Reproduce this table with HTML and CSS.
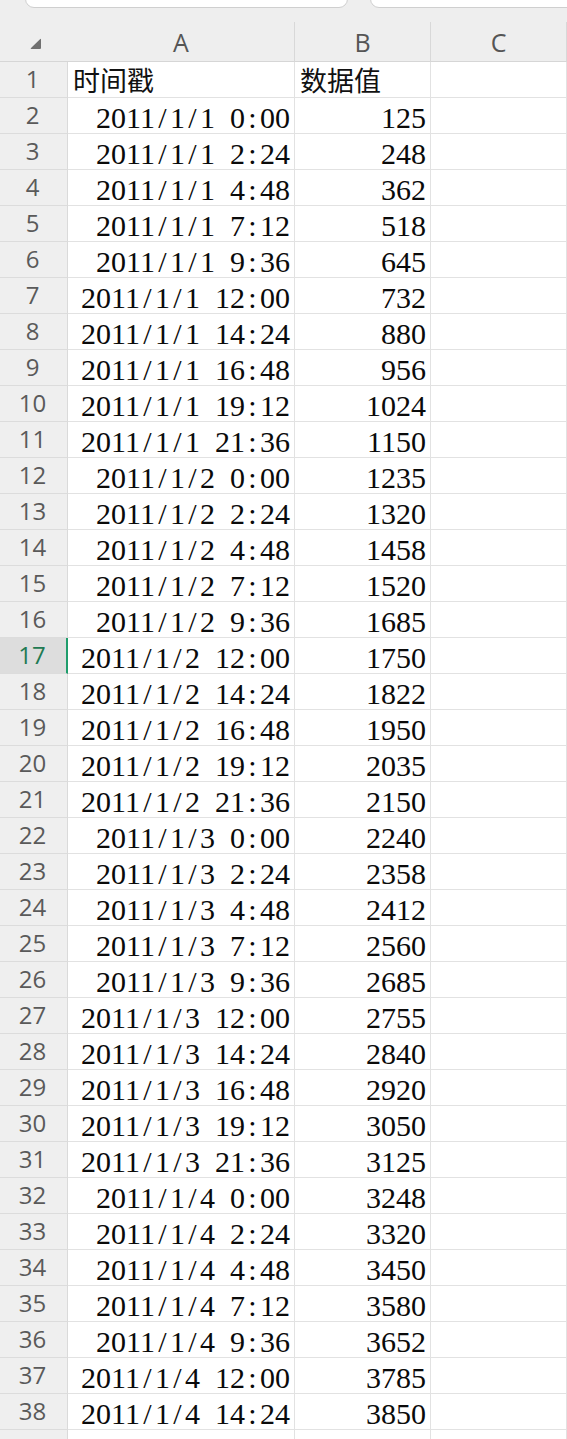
FILE: index.html
```html
<!DOCTYPE html>
<html lang="zh">
<head>
<meta charset="utf-8">
<title>Sheet</title>
<link rel="stylesheet" href="styles.css">
</head>
<body>
<div class="sheet">
  <div class="tabs">
    <div class="tab tab-1"></div>
    <div class="tab tab-2"></div>
  </div>
  <div class="row head">
    <div class="rh corner"><svg class="tri" width="11" height="11" viewBox="0 0 11 11"><path d="M10 1.2 Q11 0 11 1.6 V10 Q11 11 10 11 H1.4 Q0 11 1 10 Z" fill="#707070"/></svg></div>
    <div class="c a ch">A</div>
    <div class="c b ch">B</div>
    <div class="c cc ch">C</div>
  </div>
  <div class="row"><div class="rh">1</div><div class="c a l cjk">时间戳</div><div class="c b l cjk">数据值</div><div class="c cc"></div></div>
  <div class="row"><div class="rh">2</div><div class="c a">2011<i>/</i>1<i>/</i>1<i> </i>0<i>:</i>00</div><div class="c b">125</div><div class="c cc"></div></div>
  <div class="row"><div class="rh">3</div><div class="c a">2011<i>/</i>1<i>/</i>1<i> </i>2<i>:</i>24</div><div class="c b">248</div><div class="c cc"></div></div>
  <div class="row"><div class="rh">4</div><div class="c a">2011<i>/</i>1<i>/</i>1<i> </i>4<i>:</i>48</div><div class="c b">362</div><div class="c cc"></div></div>
  <div class="row"><div class="rh">5</div><div class="c a">2011<i>/</i>1<i>/</i>1<i> </i>7<i>:</i>12</div><div class="c b">518</div><div class="c cc"></div></div>
  <div class="row"><div class="rh">6</div><div class="c a">2011<i>/</i>1<i>/</i>1<i> </i>9<i>:</i>36</div><div class="c b">645</div><div class="c cc"></div></div>
  <div class="row"><div class="rh">7</div><div class="c a">2011<i>/</i>1<i>/</i>1<i> </i>12<i>:</i>00</div><div class="c b">732</div><div class="c cc"></div></div>
  <div class="row"><div class="rh">8</div><div class="c a">2011<i>/</i>1<i>/</i>1<i> </i>14<i>:</i>24</div><div class="c b">880</div><div class="c cc"></div></div>
  <div class="row"><div class="rh">9</div><div class="c a">2011<i>/</i>1<i>/</i>1<i> </i>16<i>:</i>48</div><div class="c b">956</div><div class="c cc"></div></div>
  <div class="row"><div class="rh">10</div><div class="c a">2011<i>/</i>1<i>/</i>1<i> </i>19<i>:</i>12</div><div class="c b">1024</div><div class="c cc"></div></div>
  <div class="row"><div class="rh">11</div><div class="c a">2011<i>/</i>1<i>/</i>1<i> </i>21<i>:</i>36</div><div class="c b">1150</div><div class="c cc"></div></div>
  <div class="row"><div class="rh">12</div><div class="c a">2011<i>/</i>1<i>/</i>2<i> </i>0<i>:</i>00</div><div class="c b">1235</div><div class="c cc"></div></div>
  <div class="row"><div class="rh">13</div><div class="c a">2011<i>/</i>1<i>/</i>2<i> </i>2<i>:</i>24</div><div class="c b">1320</div><div class="c cc"></div></div>
  <div class="row"><div class="rh">14</div><div class="c a">2011<i>/</i>1<i>/</i>2<i> </i>4<i>:</i>48</div><div class="c b">1458</div><div class="c cc"></div></div>
  <div class="row"><div class="rh">15</div><div class="c a">2011<i>/</i>1<i>/</i>2<i> </i>7<i>:</i>12</div><div class="c b">1520</div><div class="c cc"></div></div>
  <div class="row"><div class="rh">16</div><div class="c a">2011<i>/</i>1<i>/</i>2<i> </i>9<i>:</i>36</div><div class="c b">1685</div><div class="c cc"></div></div>
  <div class="row"><div class="rh active">17</div><div class="c a">2011<i>/</i>1<i>/</i>2<i> </i>12<i>:</i>00</div><div class="c b">1750</div><div class="c cc"></div></div>
  <div class="row"><div class="rh">18</div><div class="c a">2011<i>/</i>1<i>/</i>2<i> </i>14<i>:</i>24</div><div class="c b">1822</div><div class="c cc"></div></div>
  <div class="row"><div class="rh">19</div><div class="c a">2011<i>/</i>1<i>/</i>2<i> </i>16<i>:</i>48</div><div class="c b">1950</div><div class="c cc"></div></div>
  <div class="row"><div class="rh">20</div><div class="c a">2011<i>/</i>1<i>/</i>2<i> </i>19<i>:</i>12</div><div class="c b">2035</div><div class="c cc"></div></div>
  <div class="row"><div class="rh">21</div><div class="c a">2011<i>/</i>1<i>/</i>2<i> </i>21<i>:</i>36</div><div class="c b">2150</div><div class="c cc"></div></div>
  <div class="row"><div class="rh">22</div><div class="c a">2011<i>/</i>1<i>/</i>3<i> </i>0<i>:</i>00</div><div class="c b">2240</div><div class="c cc"></div></div>
  <div class="row"><div class="rh">23</div><div class="c a">2011<i>/</i>1<i>/</i>3<i> </i>2<i>:</i>24</div><div class="c b">2358</div><div class="c cc"></div></div>
  <div class="row"><div class="rh">24</div><div class="c a">2011<i>/</i>1<i>/</i>3<i> </i>4<i>:</i>48</div><div class="c b">2412</div><div class="c cc"></div></div>
  <div class="row"><div class="rh">25</div><div class="c a">2011<i>/</i>1<i>/</i>3<i> </i>7<i>:</i>12</div><div class="c b">2560</div><div class="c cc"></div></div>
  <div class="row"><div class="rh">26</div><div class="c a">2011<i>/</i>1<i>/</i>3<i> </i>9<i>:</i>36</div><div class="c b">2685</div><div class="c cc"></div></div>
  <div class="row"><div class="rh">27</div><div class="c a">2011<i>/</i>1<i>/</i>3<i> </i>12<i>:</i>00</div><div class="c b">2755</div><div class="c cc"></div></div>
  <div class="row"><div class="rh">28</div><div class="c a">2011<i>/</i>1<i>/</i>3<i> </i>14<i>:</i>24</div><div class="c b">2840</div><div class="c cc"></div></div>
  <div class="row"><div class="rh">29</div><div class="c a">2011<i>/</i>1<i>/</i>3<i> </i>16<i>:</i>48</div><div class="c b">2920</div><div class="c cc"></div></div>
  <div class="row"><div class="rh">30</div><div class="c a">2011<i>/</i>1<i>/</i>3<i> </i>19<i>:</i>12</div><div class="c b">3050</div><div class="c cc"></div></div>
  <div class="row"><div class="rh">31</div><div class="c a">2011<i>/</i>1<i>/</i>3<i> </i>21<i>:</i>36</div><div class="c b">3125</div><div class="c cc"></div></div>
  <div class="row"><div class="rh">32</div><div class="c a">2011<i>/</i>1<i>/</i>4<i> </i>0<i>:</i>00</div><div class="c b">3248</div><div class="c cc"></div></div>
  <div class="row"><div class="rh">33</div><div class="c a">2011<i>/</i>1<i>/</i>4<i> </i>2<i>:</i>24</div><div class="c b">3320</div><div class="c cc"></div></div>
  <div class="row"><div class="rh">34</div><div class="c a">2011<i>/</i>1<i>/</i>4<i> </i>4<i>:</i>48</div><div class="c b">3450</div><div class="c cc"></div></div>
  <div class="row"><div class="rh">35</div><div class="c a">2011<i>/</i>1<i>/</i>4<i> </i>7<i>:</i>12</div><div class="c b">3580</div><div class="c cc"></div></div>
  <div class="row"><div class="rh">36</div><div class="c a">2011<i>/</i>1<i>/</i>4<i> </i>9<i>:</i>36</div><div class="c b">3652</div><div class="c cc"></div></div>
  <div class="row"><div class="rh">37</div><div class="c a">2011<i>/</i>1<i>/</i>4<i> </i>12<i>:</i>00</div><div class="c b">3785</div><div class="c cc"></div></div>
  <div class="row"><div class="rh">38</div><div class="c a">2011<i>/</i>1<i>/</i>4<i> </i>14<i>:</i>24</div><div class="c b">3850</div><div class="c cc"></div></div>
  <div class="row"><div class="rh">39</div><div class="c a">2011<i>/</i>1<i>/</i>4<i> </i>16<i>:</i>48</div><div class="c b">3920</div><div class="c cc"></div></div>
</div>
</body>
</html>
```
FILE: styles.css
```css
html, body {
  margin: 0;
  padding: 0;
  background: #ffffff;
}
body {
  width: 567px;
  height: 1439px;
  overflow: hidden;
}
.sheet {
  display: flex;
  flex-direction: column;
  width: 567px;
}
.tabs {
  display: flex;
  gap: 22px;
  height: 22px;
  padding-left: 25px;
  background: #eeeeee;
  overflow: hidden;
  box-sizing: border-box;
}
.tab {
  height: 24px;
  margin-top: -16px;
  background: #ffffff;
  border: 1px solid #cfcfcf;
  border-radius: 9px;
  box-sizing: border-box;
  flex-shrink: 0;
}
.tab-1 { width: 323px; }
.tab-2 { width: 260px; }
.row {
  display: flex;
  height: 36px;
  flex-shrink: 0;
}
.row.head {
  height: 40px;
  background: #eeeeee;
}
.rh {
  width: 68px;
  flex-shrink: 0;
  box-sizing: border-box;
  background: #efefef;
  border-right: 1px solid #dadada;
  border-bottom: 1px solid #dcdcdc;
  font-family: "Open Sans", "Noto Sans", sans-serif;
  font-size: 24px;
  color: #5a5a5a;
  text-align: center;
  line-height: 34px;
  padding-right: 2px;
}
.rh.active {
  background: #dddddd;
  color: #217a52;
  border-right: 2px solid #1f9d6c;
}
.rh.corner {
  border-right: none;
  border-bottom: 1px solid #d6d6d6;
  background: #eeeeee;
  padding: 16px 0 0 30px;
  text-align: left;
}
.tri { display: block; }
.c {
  box-sizing: border-box;
  border-right: 1px solid #e2e2e2;
  border-bottom: 1px solid #e2e2e2;
  font-family: "Liberation Serif", "Times New Roman", serif;
  font-size: 30px;
  line-height: 30px;
  padding-top: 5px;
  color: #0a0a0a;
  text-align: right;
  white-space: nowrap;
  overflow: hidden;
}
.c.a { width: 227px; padding-right: 4px; }
.c.b { width: 136px; padding-right: 4px; }
.c.cc { flex: 1; }
.c.l {
  text-align: left;
  padding-left: 5px;
}
.c.cjk {
  font-family: "Noto Sans CJK SC", sans-serif;
  font-size: 27px;
  line-height: 34px;
  padding-top: 1px;
  color: #111111;
  overflow: visible;
}
.c.ch {
  font-family: "Open Sans", "Noto Sans", sans-serif;
  font-size: 25px;
  color: #555555;
  text-align: center;
  line-height: 36px;
  padding: 2px 0 0 0;
  border-right: 1px solid #d8d8d8;
  border-bottom: 1px solid #d6d6d6;
  overflow: visible;
}
i {
  font-style: normal;
  display: inline-block;
  width: 15px;
  text-align: center;
}
```
